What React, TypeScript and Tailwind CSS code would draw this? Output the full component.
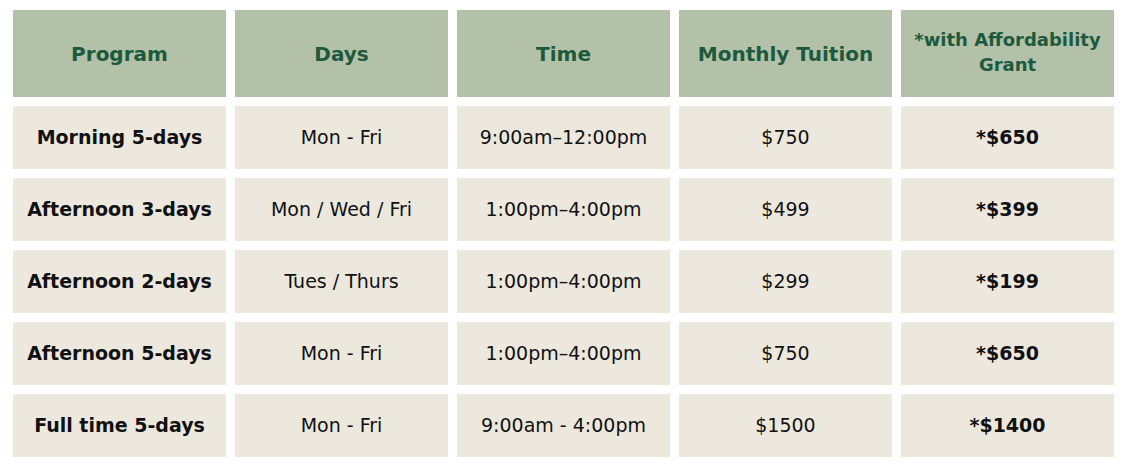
const rows = [
  ['Morning 5-days', 'Mon - Fri', '9:00am–12:00pm', '$750', '*$650'],
  ['Afternoon 3-days', 'Mon / Wed / Fri', '1:00pm–4:00pm', '$499', '*$399'],
  ['Afternoon 2-days', 'Tues / Thurs', '1:00pm–4:00pm', '$299', '*$199'],
  ['Afternoon 5-days', 'Mon - Fri', '1:00pm–4:00pm', '$750', '*$650'],
  ['Full time 5-days', 'Mon - Fri', '9:00am - 4:00pm', '$1500', '*$1400'],
]

const head = 'bg-[#b3c1a8] flex items-center justify-center text-center font-bold text-[#1c5a3e]'
const cell = 'bg-[#ece8de] flex items-center justify-center text-[19px] text-[#111]'

export default function App() {
  return (
    <div className="w-[1126px] h-[472px] bg-white pt-[10px] pl-[13px] font-['DejaVu_Sans',sans-serif]">
      <div className="grid grid-cols-[repeat(5,213px)] grid-rows-[87px_repeat(5,63px)] gap-[9px]">
        {/* header */}
        <div className={head + ' text-[20px]'}>Program</div>
        <div className={head + ' text-[20px]'}>Days</div>
        <div className={head + ' text-[20px]'}>Time</div>
        <div className={head + ' text-[20px]'}>Monthly Tuition</div>
        <div className={head + ' text-[18px] leading-[25px] pb-[4px]'}>
          *with Affordability<br />Grant
        </div>

        {rows.map((r, i) => (
          <div key={i} className="contents">
            <div className={cell + ' font-bold'}>{r[0]}</div>
            <div className={cell}>{r[1]}</div>
            <div className={cell}>{r[2]}</div>
            <div className={cell}>{r[3]}</div>
            <div className={cell + ' font-bold'}>{r[4]}</div>
          </div>
        ))}
      </div>
    </div>
  )
}
